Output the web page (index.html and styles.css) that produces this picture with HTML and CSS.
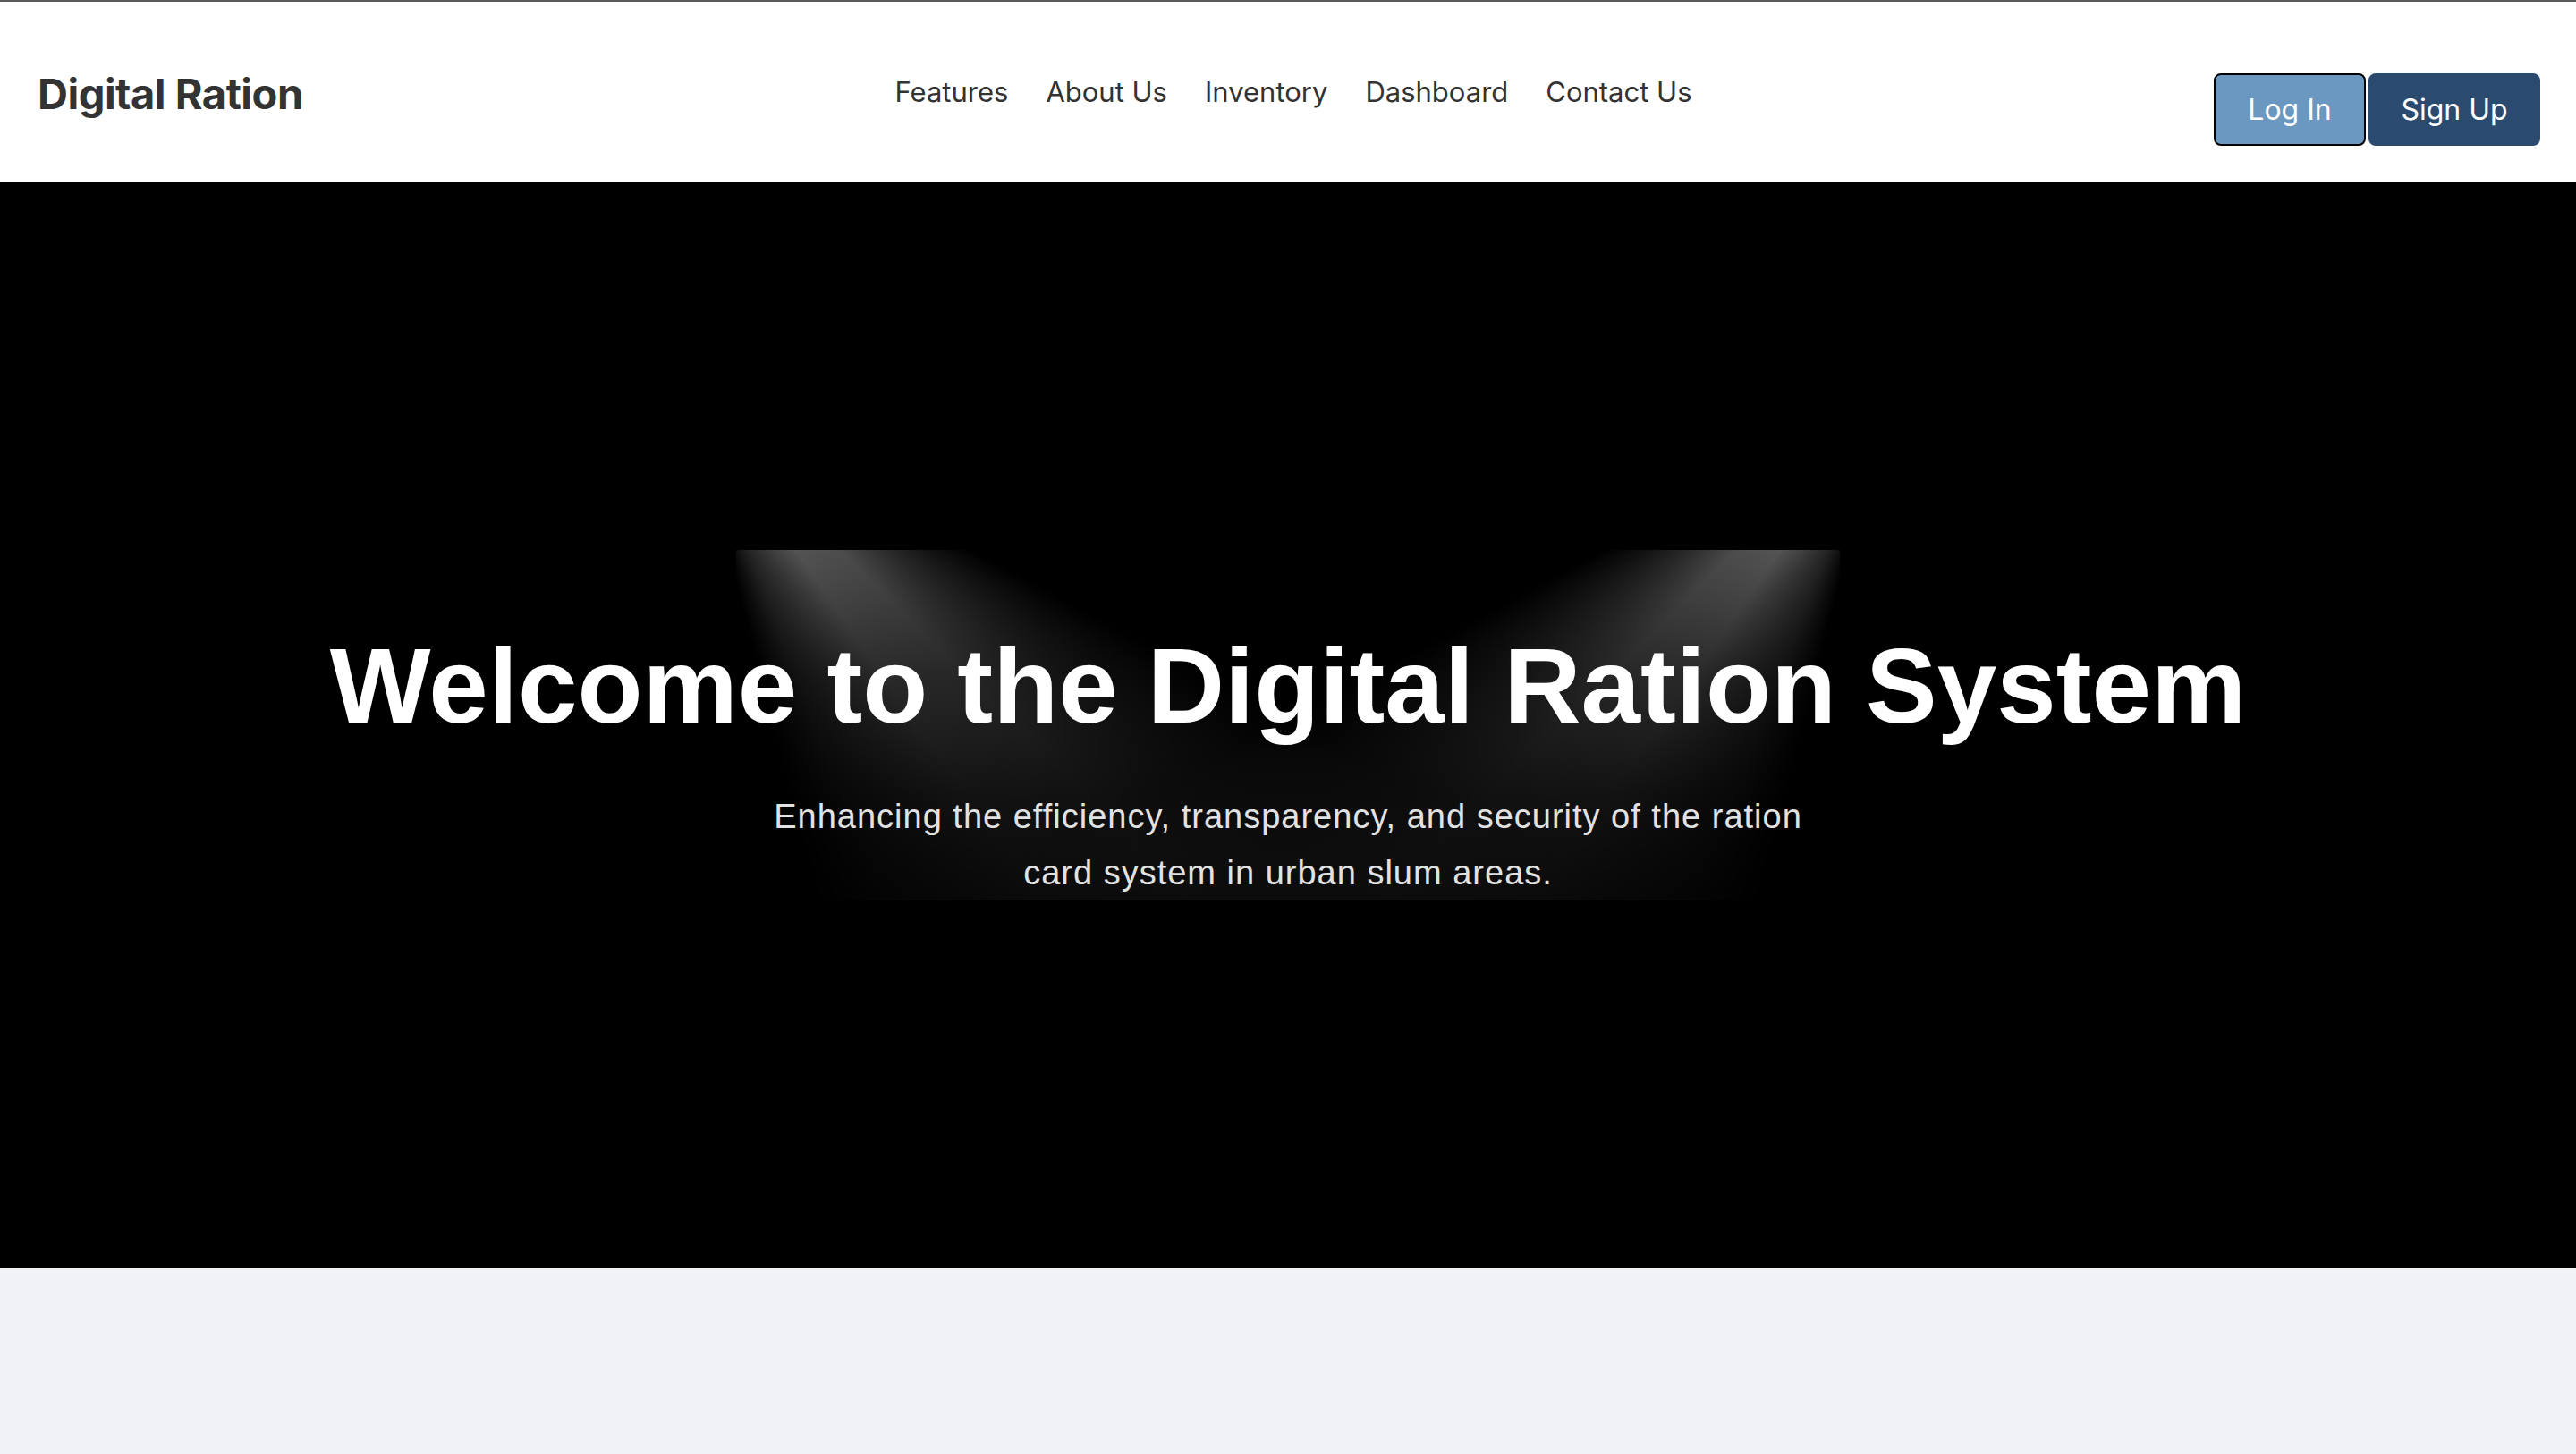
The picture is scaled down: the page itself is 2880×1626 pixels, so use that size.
FILE: index.html
```html
<!DOCTYPE html>
<html lang="en">
<head>
<meta charset="utf-8">
<title>Digital Ration</title>
<link rel="stylesheet" href="styles.css">
</head>
<body>
<header class="site-header">
  <div class="brand"><span class="logo">Digital Ration</span></div>
  <nav class="main-nav">
    <a href="#">Features</a>
    <a href="#">About Us</a>
    <a href="#">Inventory</a>
    <a href="#">Dashboard</a>
    <a href="#">Contact Us</a>
  </nav>
  <div class="auth">
    <button class="btn btn-login">Log In</button>
    <button class="btn btn-signup">Sign Up</button>
  </div>
</header>
<section class="hero">
  <div class="lamp">
    <div class="beam beam-left"></div>
    <div class="beam beam-right"></div>
  </div>
  <h1 class="hero-title">Welcome to the Digital Ration System</h1>
  <p class="hero-sub">Enhancing the efficiency, transparency, and security of the ration card system in urban slum areas.</p>
</section>
<main class="page-body"></main>
</body>
</html>
```
FILE: styles.css
```css
* { box-sizing: border-box; }
html, body { margin: 0; padding: 0; }
body {
  background: #f0f2f6;
  font-family: Inter, "Noto Sans", sans-serif;
  color: #333;
}
.site-header {
  display: grid;
  grid-template-columns: 1fr auto 1fr;
  align-items: center;
  height: 203px;
  border-top: 2px solid #5a5a5a;
  background: #fff;
  padding: 0 40px 0 42px;
}
.brand { justify-self: start; padding-top: 4px; }
.logo {
  font-size: 47px;
  font-weight: 700;
  color: #333;
  letter-spacing: -0.5px;
}
.main-nav {
  display: flex;
  gap: 42px;
  align-self: start;
  padding-top: 82px;
  margin-left: 10px;
}
.main-nav a {
  font-size: 31px;
  color: #333;
  text-decoration: none;
}
.auth {
  justify-self: end;
  display: flex;
  gap: 3px;
  margin-top: 40px;
}
.btn {
  height: 81px;
  border-radius: 8px;
  font-family: Inter, "Noto Sans", sans-serif;
  font-size: 32px;
  color: #fff;
  border: 2px solid transparent;
  padding: 0;
  white-space: nowrap;
  text-align: center;
}
.btn-login { background: #6a98c0; border-color: #000; width: 170px; }
.btn-signup { background: #2a4a70; border-color: #2a4a70; width: 192px; }

.hero {
  position: relative;
  height: 1215px;
  background: #000;
  padding-top: 492px;
  display: flex;
  flex-direction: column;
  align-items: center;
  overflow: hidden;
}
.lamp {
  position: absolute;
  top: 412px;
  left: 50%;
  width: 1235px;
  height: 392px;
  transform: translateX(-50%);
  overflow: hidden;
  -webkit-mask-image: linear-gradient(to bottom, #000 0%, rgba(0,0,0,0.5) 35%, rgba(0,0,0,0.22) 70%, rgba(0,0,0,0.12) 100%);
  mask-image: linear-gradient(to bottom, #000 0%, rgba(0,0,0,0.5) 35%, rgba(0,0,0,0.22) 70%, rgba(0,0,0,0.12) 100%);
}
.beam { position: absolute; inset: 0; }
.beam-left {
  background: conic-gradient(from 0deg at -50px -167px,
    rgba(255,255,255,0) 118deg,
    rgba(255,255,255,0.30) 135deg,
    rgba(255,255,255,0.33) 145deg,
    rgba(255,255,255,0.14) 159deg,
    rgba(255,255,255,0) 166deg);
}
.beam-right {
  background: conic-gradient(from 0deg at 1285px -167px,
    rgba(255,255,255,0) 194deg,
    rgba(255,255,255,0.14) 201deg,
    rgba(255,255,255,0.33) 215deg,
    rgba(255,255,255,0.30) 225deg,
    rgba(255,255,255,0) 242deg);
}
.hero-title {
  position: relative;
  margin: 0;
  font-family: "Liberation Sans", Arial, sans-serif;
  font-weight: 700;
  font-size: 119.5px;
  line-height: 144px;
  color: #fff;
  white-space: nowrap;
}
.hero-sub {
  position: relative;
  margin: 43px 0 0;
  max-width: 1200px;
  text-align: center;
  font-family: "Liberation Sans", Arial, sans-serif;
  font-size: 38px;
  letter-spacing: 1px;
  line-height: 63px;
  color: #e2e2e2;
}
.page-body { min-height: 208px; }
```
